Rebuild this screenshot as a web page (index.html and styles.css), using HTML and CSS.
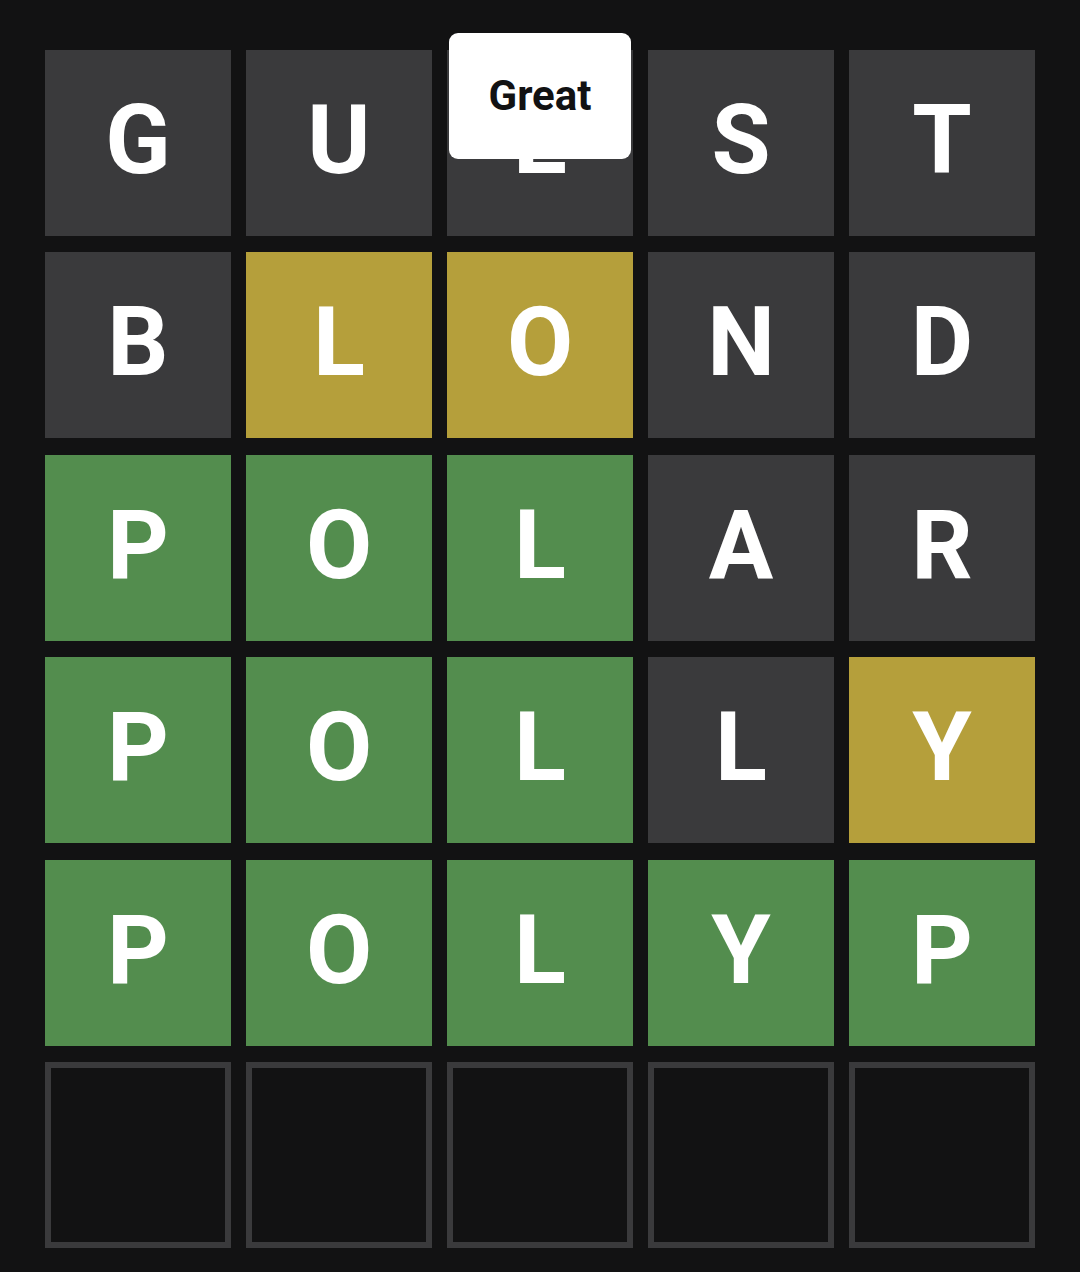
FILE: index.html
```html
<!DOCTYPE html>
<html>
<head>
<meta charset="utf-8">
<link rel="stylesheet" href="styles.css">
</head>
<body>
<div class="board">
  <div class="tile absent">G</div>
  <div class="tile absent">U</div>
  <div class="tile absent">E</div>
  <div class="tile absent">S</div>
  <div class="tile absent">T</div>

  <div class="tile absent">B</div>
  <div class="tile present">L</div>
  <div class="tile present">O</div>
  <div class="tile absent">N</div>
  <div class="tile absent">D</div>

  <div class="tile correct">P</div>
  <div class="tile correct">O</div>
  <div class="tile correct">L</div>
  <div class="tile absent">A</div>
  <div class="tile absent">R</div>

  <div class="tile correct">P</div>
  <div class="tile correct">O</div>
  <div class="tile correct">L</div>
  <div class="tile absent">L</div>
  <div class="tile present">Y</div>

  <div class="tile correct">P</div>
  <div class="tile correct">O</div>
  <div class="tile correct">L</div>
  <div class="tile correct">Y</div>
  <div class="tile correct">P</div>

  <div class="tile empty"></div>
  <div class="tile empty"></div>
  <div class="tile empty"></div>
  <div class="tile empty"></div>
  <div class="tile empty"></div>

  <div class="toast">Great</div>
</div>
</body>
</html>
```
FILE: styles.css
```css
html, body {
  margin: 0;
  padding: 0;
  background: #121213;
}
body {
  width: 1080px;
  height: 1272px;
  overflow: hidden;
}
.board {
  position: relative;
  display: grid;
  grid-template-columns: repeat(5, 186px);
  grid-template-rows: repeat(6, 186px);
  column-gap: 15px;
  row-gap: 16.4px;
  padding: 50px 45px 0 45px;
}
.tile {
  box-sizing: border-box;
  display: flex;
  align-items: center;
  justify-content: center;
  padding-bottom: 6px;
  font-family: Roboto, "Liberation Sans", sans-serif;
  font-weight: 700;
  font-size: 96px;
  line-height: 1;
  color: #ffffff;
}
.absent { background: #3a3a3c; }
.present { background: #b59f3b; }
.correct { background: #538d4e; }
.empty {
  background: #121213;
  border: 6px solid #3a3a3c;
}
.toast {
  position: absolute;
  top: 33px;
  left: 449px;
  width: 182px;
  height: 126px;
  box-sizing: border-box;
  background: #ffffff;
  border-radius: 9px;
  display: flex;
  align-items: center;
  justify-content: center;
  padding-bottom: 2px;
  font-family: Roboto, "Liberation Sans", sans-serif;
  font-weight: 700;
  font-size: 42px;
  color: #121213;
}
```
